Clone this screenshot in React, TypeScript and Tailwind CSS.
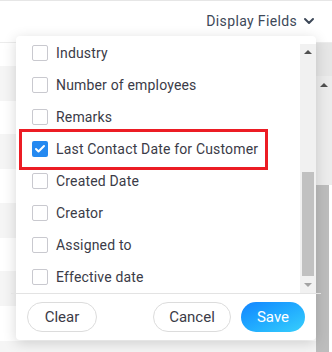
import { ChevronDown, Check } from "lucide-react";

const fields = [
  { label: "Industry", checked: false },
  { label: "Number of employees", checked: false },
  { label: "Remarks", checked: false },
  { label: "Last Contact Date for Customer", checked: true },
  { label: "Created Date", checked: false },
  { label: "Creator", checked: false },
  { label: "Assigned to", checked: false },
  { label: "Effective date", checked: false },
];

function Checkbox({ checked }: { checked: boolean }) {
  if (checked) {
    return (
      <span className="flex h-4 w-4 shrink-0 items-center justify-center rounded-[2px] bg-[#2589f0]">
        <Check className="h-3 w-3 text-white" strokeWidth={4} />
      </span>
    );
  }
  return <span className="h-4 w-4 shrink-0 rounded-[2px] border border-[#c9c9cf] bg-white" />;
}

export default function App() {
  return (
    <div
      className="relative h-[352px] w-[332px] overflow-hidden bg-white text-[#3b3b47]"
      style={{ fontFamily: "Roboto, 'Liberation Sans', sans-serif" }}
    >
      {/* Top bar */}
      <div className="flex h-[42px] items-center justify-end border-t border-[#e6e6e6] pr-[15px] pb-[1px]">
        <button className="flex items-center gap-[4px] text-[14px] tracking-[0.35px] text-[#3d4858]">
          Display Fields
          <ChevronDown className="h-[16px] w-[16px]" strokeWidth={3} />
        </button>
      </div>

      {/* Background table */}
      <div className="flex border-t border-[#ececec]">
        <div className="flex-1">
          <div className="h-[23px]" />
          <div className="h-[35px] bg-[#f5f5f5]" />
          <div className="h-[33px]" />
          <div className="h-[35px] bg-[#f5f5f5]" />
          <div className="h-[34px]" />
          <div className="h-[35px] bg-[#f5f5f5]" />
          <div className="h-[33px]" />
          <div className="h-[35px] bg-[#f5f5f5]" />
          <div className="h-[35px]" />
          <div className="h-[35px] bg-[#f5f5f5]" />
        </div>
        <div className="flex w-[16px] flex-col">
          <div className="h-[33px] bg-[#e6e6e6]" />
          <div className="flex h-[17px] items-center justify-center bg-[#ececec]">
            <span className="h-0 w-0 border-x-[4px] border-b-[4px] border-x-transparent border-b-[#505050]" />
          </div>
          <div className="h-[92px] bg-[#ececec]" />
          <div className="h-[200px] w-[13px] bg-[#bdbdbd]" />
        </div>
      </div>

      {/* Dropdown panel */}
      <div className="absolute left-[16px] top-[36px] flex h-[304px] w-[300px] flex-col rounded-[4px] bg-white shadow-[0_3px_14px_rgba(0,0,0,0.16)]">
        <div className="flex h-[257px]">
          <ul className="flex-1 pt-px">
            {fields.map((f) => (
              <li key={f.label} className="flex h-8 items-center gap-2 pl-4 text-[14px] tracking-[0.17px]">
                <Checkbox checked={f.checked} />
                <span>{f.label}</span>
              </li>
            ))}
          </ul>
          <div className="mt-[8px] flex w-[16px] flex-col bg-[#f1f1f1]">
            <div className="flex h-[17px] items-center justify-center">
              <span className="h-0 w-0 border-x-[4px] border-b-[4px] border-x-transparent border-b-[#505050]" />
            </div>
            <div className="h-[111px]" />
            <div className="mx-[2px] h-[105px] bg-[#c1c1c1]" />
            <div className="flex h-[17px] items-center justify-center">
              <span className="h-0 w-0 border-x-[4px] border-t-[4px] border-x-transparent border-t-[#a3a3a3]" />
            </div>
          </div>
        </div>

        <div className="-mx-[5px] h-px bg-[#e3e3e3]" />

        <div className="flex items-start justify-between px-[11px] pt-[8px]">
          <button className="h-[30px] w-[70px] rounded-full border border-[#dcdcdc] text-[15px] text-[#3b3b47]">
            Clear
          </button>
          <div className="flex gap-[10px]">
            <button className="h-[30px] w-[78px] rounded-full border border-[#dcdcdc] text-[15px] text-[#3b3b47]">
              Cancel
            </button>
            <button className="h-[30px] w-[64px] rounded-full bg-linear-to-br from-[#1684ff] to-[#38cffc] text-[15px] text-white">
              Save
            </button>
          </div>
        </div>

        {/* highlight */}
        <div className="absolute left-[3px] top-[93px] h-[41px] w-[249px] border-[3px] border-[#ec1c24]" />
      </div>
    </div>
  );
}
